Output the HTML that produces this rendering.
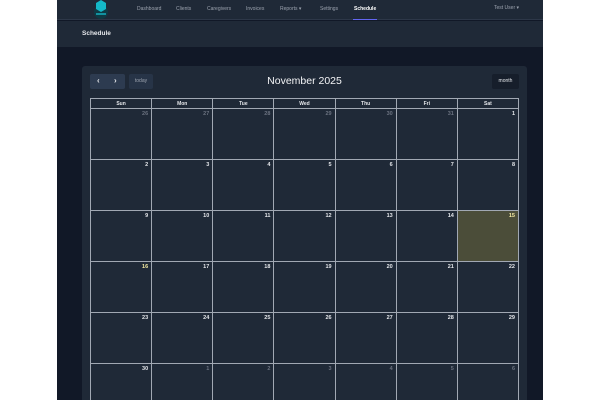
<!DOCTYPE html><html><head><style>
*{margin:0;padding:0;box-sizing:border-box}
body{width:600px;height:400px;background:#fff;font-family:"Liberation Sans",sans-serif;overflow:hidden;position:relative}
#app{position:absolute;left:57px;top:0;width:486px;height:400px;background:#111827;overflow:hidden}
.nav{position:absolute;left:0;top:0;width:486px;height:20px;background:#1f2937;border-bottom:1px solid #2d3748}
.nav span{position:absolute;top:6px;font-size:5px;color:#9ca3af}
.hdr{position:absolute;left:0;top:21px;width:486px;height:26px;background:#1f2937}
.card{position:absolute;left:25px;top:66px;width:445px;height:340px;background:#1f2937;border-radius:3px}
table{position:absolute;left:8px;top:32px;border-collapse:collapse;width:429px;table-layout:fixed}
td,th{border:1px solid #a1a8b3;color:#e5e7eb}
th{height:10px;font-size:5px;font-weight:bold}
td{height:51px;vertical-align:top;text-align:right;font-size:5.5px;font-weight:bold;padding:2px 3px}
td.o{color:#6b7280}
</style></head><body><div id="app">
<div class="nav">
<svg style="position:absolute;left:36px;top:0" width="16" height="20"><circle cx="8" cy="12" r="7" fill="#0f3a44"/><path d="M3 3 L8 0 L13 3 L13 9 L8 12 L3 9Z" fill="#14b8c8"/><rect x="3" y="13" width="10" height="2" fill="#14b8c8" opacity=".7"/></svg>
<span style="left:80px">Dashboard</span><span style="left:119px">Clients</span><span style="left:150px">Caregivers</span><span style="left:189px">Invoices</span><span style="left:223px">Reports ▾</span><span style="left:263px">Settings</span><span style="left:297px;color:#fff;font-weight:bold">Schedule</span>
<div style="position:absolute;left:296px;top:19px;width:24px;height:1px;background:#6366f1"></div>
<span style="left:437px;top:5px">Test User ▾</span>
</div>
<div class="hdr"><span style="position:absolute;left:25px;top:9px;font-size:6.5px;font-weight:bold;color:#e5e7eb">Schedule</span></div>
<div class="card">
<div style="position:absolute;left:8px;top:8px;width:35px;height:15px;background:#2d3b50;border-radius:2px;color:#e5e7eb;font-size:8px;font-weight:bold;line-height:14px"><span style="position:absolute;left:7px">‹</span><span style="position:absolute;left:24px">›</span></div>
<div style="position:absolute;left:47px;top:8px;width:24px;height:15px;background:#273447;border-radius:2px;color:#9ca3af;font-size:5px;line-height:15px;text-align:center">today</div>
<div style="position:absolute;left:0;width:445px;top:9px;text-align:center;color:#f3f4f6;font-size:10.5px">November 2025</div>
<div style="position:absolute;left:410px;top:8px;width:27px;height:15px;background:#161e2b;border-radius:2px;color:#e5e7eb;font-size:5px;line-height:15px;text-align:center">month</div>
<table>
<tr><th>Sun</th><th>Mon</th><th>Tue</th><th>Wed</th><th>Thu</th><th>Fri</th><th>Sat</th></tr>
<tr><td class="o">26</td><td class="o">27</td><td class="o">28</td><td class="o">29</td><td class="o">30</td><td class="o">31</td><td>1</td></tr>
<tr><td>2</td><td>3</td><td>4</td><td>5</td><td>6</td><td>7</td><td>8</td></tr>
<tr><td>9</td><td>10</td><td>11</td><td>12</td><td>13</td><td>14</td><td style="background:#4b4d39;color:#f3e9a0">15</td></tr>
<tr><td style="color:#f3e9a0">16</td><td>17</td><td>18</td><td>19</td><td>20</td><td>21</td><td>22</td></tr>
<tr><td>23</td><td>24</td><td>25</td><td>26</td><td>27</td><td>28</td><td>29</td></tr>
<tr><td>30</td><td class="o">1</td><td class="o">2</td><td class="o">3</td><td class="o">4</td><td class="o">5</td><td class="o">6</td></tr>
</table></div></div></body></html>
